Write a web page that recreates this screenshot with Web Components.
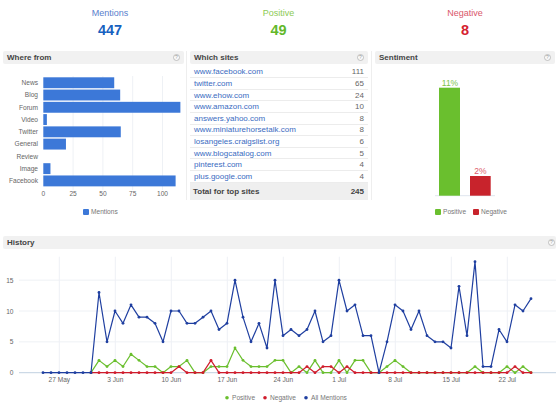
<!DOCTYPE html>
<html lang="en">
<head>
<meta charset="utf-8">
<title>Dashboard</title>
<style>
  html, body { margin: 0; background: #fff; }
  body { font-family: "Liberation Sans", Arial, sans-serif; }
</style>
</head>
<body>
<social-dashboard></social-dashboard>
<script>
const SVG_FONT = 'font-family="Liberation Sans, Arial, sans-serif"';

// Big number at the top of the page
class StatTile extends HTMLElement {
  constructor() {
    super();
    this.attachShadow({ mode: 'open' });
  }
  connectedCallback() {
    const label = this.getAttribute('label');
    const value = this.getAttribute('value');
    this.shadowRoot.innerHTML = `
      <style>
        :host { display: block; text-align: center; }
        .label { font-size: 9px; line-height: 10px; padding-top: 8px; color: var(--label); }
        .value { font-size: 14.5px; line-height: 16px; font-weight: bold; margin-top: 4px; color: var(--value); }
      </style>
      <div class="label">${label}</div>
      <div class="value">${value}</div>`;
  }
}

// Box with grey title bar and help icon
class PanelBox extends HTMLElement {
  constructor() {
    super();
    this.attachShadow({ mode: 'open' });
  }
  connectedCallback() {
    this.shadowRoot.innerHTML = `
      <style>
        :host { display: block; }
        .head {
          display: flex; align-items: center; justify-content: space-between;
          height: 13px; padding: 0 var(--help-right, 4px) 0 4px;
          background: #f1f1f1; border-radius: 2px;
        }
        .title { font-size: 8px; font-weight: bold; color: #444; }
        svg { display: block; }
      </style>
      <div class="head">
        <span class="title">${this.getAttribute('heading')}</span>
        <svg width="7" height="7" viewBox="0 0 7 7">
          <circle cx="3.5" cy="3.5" r="3" fill="#fafafa" stroke="#b4b4b4" stroke-width=".8"/>
          <text x="3.5" y="5.3" text-anchor="middle" font-size="5" fill="#999" ${SVG_FONT}>?</text>
        </svg>
      </div>
      <slot></slot>`;
  }
}

// Horizontal bars of "Where from"
class WhereChart extends HTMLElement {
  constructor() {
    super();
    this.attachShadow({ mode: 'open' });
  }
  connectedCallback() {
    const rows = [['News', 59.5], ['Blog', 64.5], ['Forum', 115], ['Video', 3], ['Twitter', 65],
      ['General', 19], ['Review', 0], ['Image', 6], ['Facebook', 111]];
    const x0 = 43.3, unit = 1.192;
    let s = '';
    for (const t of [25, 50, 75, 100]) {
      const x = x0 + t * unit;
      s += `<line x1="${x}" x2="${x}" y1="76" y2="190" stroke="#eef1f5"/>`;
    }
    rows.forEach(([name, val], i) => {
      const y = 77.3 + i * 12.27;
      s += `<text x="38" y="${y + 7.8}" text-anchor="end" font-size="6.6" fill="#666">${name}</text>`;
      if (val) s += `<rect x="${x0}" y="${y}" width="${val * unit}" height="10.9" fill="#3c78d8"/>`;
    });
    for (const t of [0, 25, 50, 75, 100]) {
      s += `<text x="${x0 + t * unit}" y="196" text-anchor="middle" font-size="6.6" fill="#666">${t}</text>`;
    }
    s += `<rect x="83" y="209" width="6" height="6" rx="1" fill="#3c78d8"/>
      <text x="91" y="214.4" font-size="6.6" fill="#777">Mentions</text>`;
    this.shadowRoot.innerHTML = `
      <style>:host { display: block; } svg { display: block; }</style>
      <svg width="181" height="172" viewBox="3 64 181 172" ${SVG_FONT}>${s}</svg>`;
  }
}

// Table of "Which sites"
class SiteTable extends HTMLElement {
  constructor() {
    super();
    this.attachShadow({ mode: 'open' });
  }
  connectedCallback() {
    const sites = [['www.facebook.com', 111], ['twitter.com', 65], ['www.ehow.com', 24], ['www.amazon.com', 10],
      ['answers.yahoo.com', 8], ['www.miniaturehorsetalk.com', 8], ['losangeles.craigslist.org', 6],
      ['www.blogcatalog.com', 5], ['pinterest.com', 4], ['plus.google.com', 4]];
    const rows = sites.map(([site, n]) =>
      `<div class="row"><a href="#">${site}</a><span>${n}</span></div>`).join('');
    this.shadowRoot.innerHTML = `
      <style>
        :host { display: block; padding-top: 2.6px; font-size: 8px; }
        .row {
          display: flex; justify-content: space-between; align-items: center;
          height: 11.62px; box-sizing: border-box; padding: 0 4px;
          border-bottom: 1px solid #ececec; color: #666;
        }
        a { color: #3a6bbf; text-decoration: none; }
        .total {
          display: flex; justify-content: space-between; align-items: center;
          height: 17px; padding: 0 4px 0 3px; background: #efefef;
          font-weight: bold; color: #444;
        }
      </style>
      ${rows}
      <div class="total"><span>Total for top sites</span><span>245</span></div>`;
  }
}

// Two columns of "Sentiment"
class SentimentChart extends HTMLElement {
  constructor() {
    super();
    this.attachShadow({ mode: 'open' });
  }
  connectedCallback() {
    this.shadowRoot.innerHTML = `
      <style>:host { display: block; } svg { display: block; }</style>
      <svg width="180" height="172" viewBox="375 64 180 172" ${SVG_FONT}>
        <line x1="435" x2="495" y1="195.7" y2="195.7" stroke="#dfe6ee"/>
        <rect x="439" y="87.7" width="21" height="108" fill="#6abf2e"/>
        <rect x="470" y="176" width="20.7" height="19.7" fill="#c8232c"/>
        <text x="450" y="86" text-anchor="middle" font-size="8.5" fill="#7cc44a">11%</text>
        <text x="480.5" y="174" text-anchor="middle" font-size="8.5" fill="#dc5a6a">2%</text>
        <rect x="435" y="209" width="6" height="6" rx="1" fill="#6abf2e"/>
        <text x="443" y="214.4" font-size="6.6" fill="#777">Positive</text>
        <rect x="473" y="209" width="6" height="6" rx="1" fill="#c8232c"/>
        <text x="481" y="214.4" font-size="6.6" fill="#777">Negative</text>
      </svg>`;
  }
}

// Three lines of "History", one point per day from 25 May
class HistoryChart extends HTMLElement {
  constructor() {
    super();
    this.attachShadow({ mode: 'open' });
  }
  connectedCallback() {
    const x = i => 43 + i * 8;
    const y = v => 372.7 - v * 6.17;
    const zeros = n => new Array(n).fill(0);
    const all = [...zeros(7), 13, 5, 10, 8, 11, 9, 9, 8, 5, 10, 10, 8, 8, 9, 10, 7, 8, 15, 9, 5, 8, 4, 15,
      6, 7, 6, 7, 10, 5, 6, 15, 10, 11, 6, 6, 0, 5, 11, 10, 7, 10, 6, 5, 5, 4, 14, 6, 18, 1, 1, 7, 5, 11, 10, 12];
    const pos = [...zeros(7), 2, 1, 2, 1, 3, 2, 1, 1, 0, 1, 1, 2, 0, 0, 1, 1, 1, 4, 2, 1, 1, 1, 2,
      2, 0, 1, 0, 2, 0, 0, 2, 0, 2, 2, 0, 0, 1, 2, 1, 0, ...zeros(7), 1, 0, 0, 0, 1, 0, 1, 0];
    const neg = zeros(all.length);
    const peaks = { 17: 1, 21: 2, 33: 1, 35: 1, 36: 1, 38: 1, 59: 1 };
    for (const k in peaks) neg[k] = peaks[k];

    const series = (data, color, from) => {
      const pts = data.map((v, i) => [x(i), y(v)]).filter((p, i) => i >= from);
      const dots = pts.map(p => `<circle cx="${p[0]}" cy="${p[1]}" r="1.4"/>`).join('');
      return `<polyline points="${pts.map(p => p.join(',')).join(' ')}" fill="none" stroke="${color}" stroke-width="1.2" stroke-linejoin="round"/>
        <g fill="${color}">${dots}</g>`;
    };

    let s = '';
    [5, 10, 15].forEach(v => {
      s += `<line x1="19" x2="556" y1="${y(v)}" y2="${y(v)}" stroke="#eef1f5"/>`;
    });
    ['27 May', '3 Jun', '10 Jun', '17 Jun', '24 Jun', '1 Jul', '8 Jul', '15 Jul', '22 Jul'].forEach((d, i) => {
      const gx = 59.3 + i * 56;
      s += `<line x1="${gx}" x2="${gx}" y1="256.7" y2="372.7" stroke="#eef1f5"/>`;
      s += `<text x="${gx}" y="381.5" text-anchor="middle" font-size="6.6" fill="#666">${d}</text>`;
    });
    [0, 5, 10, 15].forEach(v => {
      s += `<text x="13.5" y="${y(v) + 2.6}" text-anchor="end" font-size="6.6" fill="#666">${v}</text>`;
    });
    s += `<line x1="19" x2="556" y1="372.7" y2="372.7" stroke="#c0d0e0"/>`;
    s += series(pos, '#6abf2e', 6) + series(neg, '#d01c2c', 6) + series(all, '#1f3fa0', 0);
    s += `<circle cx="227" cy="397.7" r="1.8" fill="#6abf2e"/>
      <text x="232" y="400" font-size="6.6" fill="#777">Positive</text>
      <circle cx="265" cy="397.7" r="1.8" fill="#d01c2c"/>
      <text x="270" y="400" font-size="6.6" fill="#777">Negative</text>
      <circle cx="306" cy="397.7" r="1.8" fill="#1f3fa0"/>
      <text x="311" y="400" font-size="6.6" fill="#777">All Mentions</text>`;
    this.shadowRoot.innerHTML = `
      <style>:host { display: block; } svg { display: block; }</style>
      <svg width="553" height="164" viewBox="3 249 553 164" ${SVG_FONT}>${s}</svg>`;
  }
}

// Whole page
class SocialDashboard extends HTMLElement {
  constructor() {
    super();
    this.attachShadow({ mode: 'open' });
  }
  connectedCallback() {
    this.shadowRoot.innerHTML = `
      <style>
        :host { display: block; width: 560px; height: 413px; overflow: hidden; font-family: "Liberation Sans", Arial, sans-serif; }
        .stats {
          display: grid; grid-template-columns: 100px 237px 136px;
          height: 51px; padding-left: 60px;
        }
        .top { display: flex; padding-left: 3px; height: 185px; }
        .rule { width: 1px; height: 149px; background: #eeeeee; flex: none; }
        .r1 { margin: 0 3px 0 2px; }
        .r2 { margin: 0 3px; }
        .where { width: 181px; }
        .sites { width: 178px; }
        .sent { width: 180px; }
        .hist { margin-left: 3px; width: 553px; --help-right: 1px; }
        .mentions { --label: #5a80cc; --value: #1561c0; }
        .positive { --label: #8ccb55; --value: #62b82a; }
        .negative { --label: #d9566a; --value: #d5232f; }
      </style>
      <div class="stats">
        <stat-tile class="mentions" label="Mentions" value="447"></stat-tile>
        <stat-tile class="positive" label="Positive" value="49"></stat-tile>
        <stat-tile class="negative" label="Negative" value="8"></stat-tile>
      </div>
      <div class="top">
        <panel-box class="where" heading="Where from"><where-chart></where-chart></panel-box>
        <div class="rule r1"></div>
        <panel-box class="sites" heading="Which sites"><site-table></site-table></panel-box>
        <div class="rule r2"></div>
        <panel-box class="sent" heading="Sentiment"><sentiment-chart></sentiment-chart></panel-box>
      </div>
      <panel-box class="hist" heading="History"><history-chart></history-chart></panel-box>`;
  }
}

customElements.define('stat-tile', StatTile);
customElements.define('panel-box', PanelBox);
customElements.define('where-chart', WhereChart);
customElements.define('site-table', SiteTable);
customElements.define('sentiment-chart', SentimentChart);
customElements.define('history-chart', HistoryChart);
customElements.define('social-dashboard', SocialDashboard);
</script>
</body>
</html>
